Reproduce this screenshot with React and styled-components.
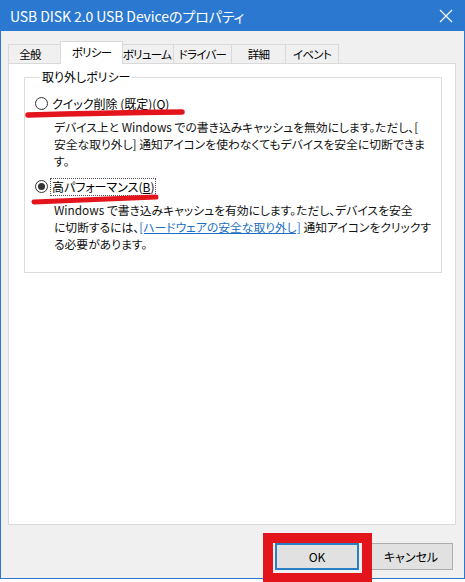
import React from 'react'
import styled, { createGlobalStyle } from 'styled-components'

const GlobalStyle = createGlobalStyle`
  html, body {
    margin: 0;
    padding: 0;
    background: #ffffff;
  }
  body {
    font-family: "Noto Sans CJK JP", "Noto Sans", sans-serif;
    font-feature-settings: "palt";
    color: #000;
  }
`

const Frame = styled.div`
  position: relative;
  width: 465px;
  height: 582px;
  overflow: hidden;
  background: #ffffff;
`

const Window = styled.div`
  box-sizing: border-box;
  width: 465px;
  height: 579px;
  display: flex;
  flex-direction: column;
  background: #f0f0f0;
  border: 1px solid #2b78d0;
  border-top: none;
`

const TitleBar = styled.div`
  height: 31px;
  margin: 0 -1px;
  flex: none;
  display: flex;
  align-items: center;
  justify-content: space-between;
  padding: 0 10px 0 10px;
  background: #2b78d0;
  color: #fff;
  font-size: 14px;
  letter-spacing: -0.1px;
`

const CloseIcon = styled.svg`
  width: 14px;
  height: 14px;
  margin-right: 2px;
`

const Body = styled.div`
  flex: 1;
  display: flex;
  flex-direction: column;
  padding: 11px 8px 0 7px;
`

const TabRow = styled.div`
  display: flex;
  align-items: flex-end;
  height: 22px;
  position: relative;
  z-index: 1;
  margin-bottom: -1px;
`

const Tab = styled.div`
  box-sizing: border-box;
  width: ${({ w }) => w}px;
  height: ${({ active }) => (active ? 23 : 20)}px;
  margin: 0 ${({ active }) => (active ? '-2px' : '0')};
  display: flex;
  align-items: center;
  justify-content: center;
  white-space: nowrap;
  padding: ${({ pad }) => pad || '0'};
  padding-bottom: ${({ active }) => (active ? '3px' : '0')};
  border: 1px solid #d9d9d9;
  border-left: ${({ first, active }) => (first || active ? '1px solid #d9d9d9' : 'none')};
  border-bottom: ${({ active }) => (active ? 'none' : '1px solid #d9d9d9')};
  background: ${({ active }) => (active ? '#ffffff' : '#f0f0f0')};
  font-size: 11.5px;
  letter-spacing: -0.7px;
  position: relative;
  z-index: ${({ active }) => (active ? 2 : 1)};
`

const Panel = styled.div`
  box-sizing: border-box;
  height: 462px;
  background: #ffffff;
  border: 1px solid #d9d9d9;
  padding: 6px 13px 0 15px;
`

const Group = styled.fieldset`
  margin: 0;
  padding: 4px 10px 20px 10px;
  border: 1px solid #dcdcdc;
  min-width: 0;
`

const Legend = styled.legend`
  padding: 0 2px;
  margin-left: 5px;
  font-size: 12px;
  line-height: 14px;
`

const Option = styled.div`
  display: flex;
  flex-direction: column;
  margin-top: ${({ gap }) => gap}px;
`

const RadioRow = styled.label`
  display: flex;
  align-items: center;
  height: 17px;
  font-size: 12px;
`

const RadioCircle = styled.span`
  box-sizing: border-box;
  width: 13px;
  height: 13px;
  border-radius: 50%;
  border: 1px solid #333;
  background: #fff;
  margin-right: ${({ space }) => space}px;
  display: flex;
  align-items: center;
  justify-content: center;
  &::after {
    content: '';
    width: 7px;
    height: 7px;
    border-radius: 50%;
    background: #333;
    display: ${({ checked }) => (checked ? 'block' : 'none')};
  }
`

const Label = styled.span`
  padding: 0 1px;
  outline: ${({ focused }) => (focused ? '1px dotted #555' : 'none')};
  line-height: 16px;
`

const Key = styled.span`
  text-decoration: underline;
`

const Desc = styled.div`
  margin: 6px 0 0 19px;
  font-size: 11.8px;
  line-height: 17px;
  white-space: nowrap;
  color: #111;
`

const Link = styled.a`
  color: #1a6fc4;
  text-decoration: underline;
`

const Footer = styled.div`
  flex: 1;
  display: flex;
  justify-content: flex-end;
  align-items: flex-start;
  gap: 10px;
  padding: 18px 3px 0 0;
`

const Button = styled.button`
  box-sizing: border-box;
  width: 84px;
  height: 27px;
  background: #e1e1e1;
  border: ${({ primary }) => (primary ? '2px solid #2a7ec4' : '1px solid #adadad')};
  font-family: inherit;
  font-feature-settings: "palt";
  font-size: 12px;
  color: #000;
  padding: 0;
`

const Overlay = styled.svg`
  position: absolute;
  left: 0;
  top: 0;
  pointer-events: none;
`

const tabs = [
  { label: '全般', w: 54, pad: '0 10px 0 0', first: true },
  { label: 'ポリシー', w: 63, active: true },
  { label: 'ボリューム', w: 53 },
  { label: 'ドライバー', w: 58 },
  { label: '詳細', w: 54 },
  { label: 'イベント', w: 53 }
]

export default function App() {
  return (
    <Frame>
      <GlobalStyle />
      <Window>
        <TitleBar>
          <span>USB DISK 2.0 USB Deviceのプロパティ</span>
          <CloseIcon viewBox="0 0 14 14">
            <path d="M1 1 L13 13 M13 1 L1 13" stroke="#fff" strokeWidth="1.2" />
          </CloseIcon>
        </TitleBar>
        <Body>
          <TabRow>
            {tabs.map(t => (
              <Tab key={t.label} w={t.w} pad={t.pad} first={t.first} active={t.active}>
                {t.label}
              </Tab>
            ))}
          </TabRow>
          <Panel>
            <Group>
              <Legend>取り外しポリシー</Legend>
              <Option gap={7}>
                <RadioRow>
                  <RadioCircle space={3} />
                  <Label>
                    クイック削除 (既定)(<Key>Q</Key>)
                  </Label>
                </RadioRow>
                <Desc>
                  デバイス上と Windows での書き込みキャッシュを無効にします。ただし、[
                  <br />
                  安全な取り外し] 通知アイコンを使わなくてもデバイスを安全に切断できま
                  <br />
                  す。
                </Desc>
              </Option>
              <Option gap={9}>
                <RadioRow>
                  <RadioCircle checked space={3} />
                  <Label focused>
                    高パフォーマンス(<Key>B</Key>)
                  </Label>
                </RadioRow>
                <Desc>
                  Windows で書き込みキャッシュを有効にします。ただし、デバイスを安全
                  <br />
                  に切断するには、<Link>[ハードウェアの安全な取り外し]</Link> 通知アイコンをクリックす
                  <br />
                  る必要があります。
                </Desc>
              </Option>
            </Group>
          </Panel>
          <Footer>
            <Button primary>OK</Button>
            <Button>キャンセル</Button>
          </Footer>
        </Body>
      </Window>
      <Overlay width="465" height="582" viewBox="0 0 465 582">
        <g stroke="#e3141c" fill="none" strokeLinecap="round">
          <path d="M58 61.5 Q 90 59.5 120 61" strokeWidth="4.5" />
          <path d="M28 115 Q 100 113 182 112" strokeWidth="5.5" />
          <path d="M34 202 Q 95 199.5 156 197" strokeWidth="5" />
          <rect x="268" y="538" width="99" height="40" strokeWidth="10" strokeLinecap="butt" />
        </g>
      </Overlay>
    </Frame>
  )
}
